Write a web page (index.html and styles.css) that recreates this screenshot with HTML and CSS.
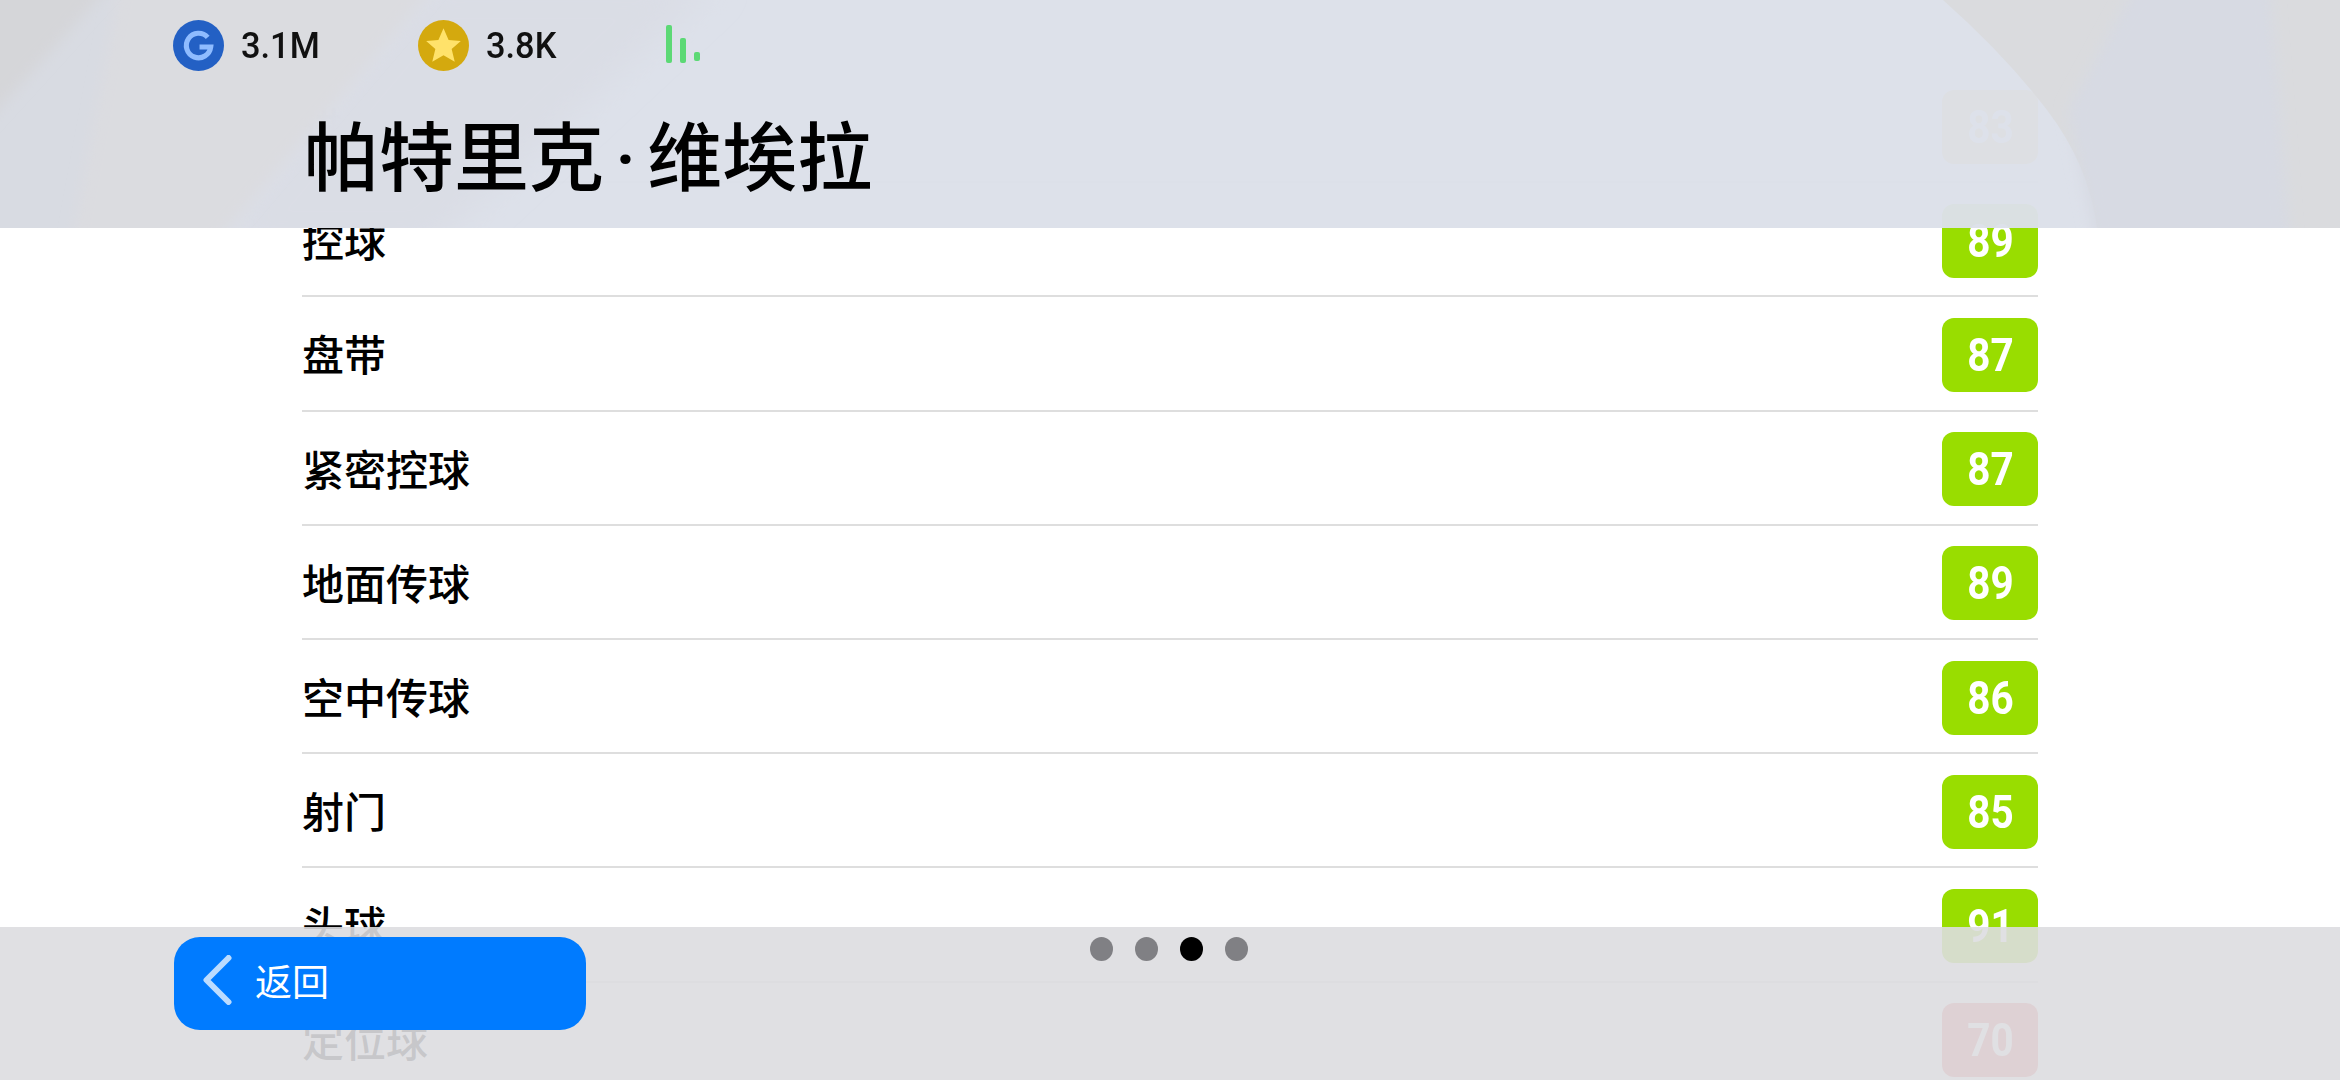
FILE: index.html
```html
<!DOCTYPE html>
<html lang="zh-CN">
<head>
<meta charset="utf-8">
<title>帕特里克·维埃拉</title>
<link rel="stylesheet" href="styles.css">
</head>
<body>
<main class="screen">
  <ul class="stats">
    <li class="stat"><span class="stat-name">进攻意识</span><span class="badge badge-mid"><span class="num">83</span></span></li>
    <li class="stat"><span class="stat-name">控球</span><span class="badge"><span class="num">89</span></span></li>
    <li class="stat"><span class="stat-name">盘带</span><span class="badge"><span class="num">87</span></span></li>
    <li class="stat"><span class="stat-name">紧密控球</span><span class="badge"><span class="num">87</span></span></li>
    <li class="stat"><span class="stat-name">地面传球</span><span class="badge"><span class="num">89</span></span></li>
    <li class="stat"><span class="stat-name">空中传球</span><span class="badge"><span class="num">86</span></span></li>
    <li class="stat"><span class="stat-name">射门</span><span class="badge"><span class="num">85</span></span></li>
    <li class="stat"><span class="stat-name">头球</span><span class="badge"><span class="num">91</span></span></li>
    <li class="stat"><span class="stat-name">定位球</span><span class="badge badge-low"><span class="num">70</span></span></li>
  </ul>

  <header class="top">
    <svg class="top-art" viewBox="0 0 2340 228" preserveAspectRatio="none" aria-hidden="true">
      <defs>
        <filter id="soft" x="-10%" y="-30%" width="120%" height="160%"><feGaussianBlur stdDeviation="7"/></filter>
        <filter id="softer" x="-10%" y="-30%" width="120%" height="160%"><feGaussianBlur stdDeviation="16"/></filter>
      </defs>
      <polygon points="-30,-30 300,-30 120,260 -30,260" fill="#d8dbe2" filter="url(#soft)"/>
      <polygon points="427,-20 720,-20 430,250 200,250" fill="#dadde5" filter="url(#softer)"/>
      <polygon points="120,-20 440,-20 210,250 70,250" fill="#dbdce0" filter="url(#soft)"/>
      <polygon points="-30,-30 125,-30 -30,140" fill="#d5d6d9" filter="url(#soft)"/>
      <path d="M1943 0Q2005 55 2047 110T2097 228H2340V0Z" fill="#dadbde"/>
      <polygon points="2133,-10 2270,-10 2290,250 2097,250 2068,110" fill="#d7dae3" filter="url(#soft)"/>
    </svg>
    <div class="wallet">
      <div class="coin">
        <svg class="coin-icon" viewBox="0 0 50 50" aria-hidden="true">
          <circle cx="25" cy="25" r="25" fill="#2360c4"/>
          <path d="M34 17A12 12 0 1 0 37 26.500H26" fill="none" stroke="#8fbcff" stroke-width="5"/>
        </svg>
        <span class="coin-value">3.1M</span>
      </div>
      <div class="coin">
        <svg class="coin-icon" viewBox="0 0 50 50" aria-hidden="true">
          <circle cx="25" cy="25" r="25" fill="#d4a90e"/>
          <polygon points="25,8 30,19.5 42,20.5 33,28.5 36,41 25,34.5 14,41 17,28.5 8,20.5 20,19.5" fill="#ffe26a"/>
        </svg>
        <span class="coin-value">3.8K</span>
      </div>
      <svg class="signal" viewBox="0 0 36 40" aria-hidden="true">
        <rect x="0" y="0" width="6" height="38" rx="2" fill="#5cd975"/>
        <rect x="14" y="13" width="6" height="25" rx="2" fill="#5cd975"/>
        <rect x="28" y="27" width="6" height="9" rx="2" fill="#5cd975"/>
      </svg>
    </div>
    <h1 class="player">帕特里克<span class="player-dot">·</span>维埃拉</h1>
  </header>

  <footer class="bottom">
    <button class="back" type="button">
      <svg class="back-icon" viewBox="0 0 30 50" aria-hidden="true">
        <path d="M26 3 4 25l22 22" fill="none" stroke="#bcdcff" stroke-width="6" stroke-linecap="round" stroke-linejoin="round"/>
      </svg>
      <span>返回</span>
    </button>
    <div class="pager">
      <i class="dot"></i><i class="dot"></i><i class="dot dot-on"></i><i class="dot"></i>
    </div>
  </footer>
</main>
</body>
</html>
```

FILE: styles.css
```css
* { box-sizing: border-box; }
html, body { margin: 0; padding: 0; height: 100%; }
body {
  background: #fff;
  font-family: "Noto Sans CJK SC", "Noto Sans", sans-serif;
  color: #000;
  overflow: hidden;
}
.screen { position: relative; width: 2340px; height: 1080px; overflow: hidden; background: #fff; }

/* list */
.stats { list-style: none; margin: 0; padding: 69px 302px 0; }
.stat {
  height: 114.2px;
  padding-top: 3px;
  border-bottom: 2px solid #dedede;
  display: flex;
  align-items: center;
  justify-content: space-between;
}
.stat-name { font-size: 42px; font-weight: 500; line-height: 1; margin-bottom: 3px; }
.badge {
  width: 96px;
  height: 74px;
  border-radius: 12px;
  background: #99dd00;
  color: #fff;
  font-family: Roboto, sans-serif;
  font-weight: 700;
  font-size: 46px;
  line-height: 74px;
  text-align: center;
}
.num { display: inline-block; transform: scaleX(0.88); }
.badge-mid { background: #e8b020; }
.badge-low { background: #e86a6a; }

/* header overlay */
.top {
  position: absolute;
  top: 0; left: 0; right: 0;
  height: 228px;
  background: rgba(220, 224, 233, 0.97);
}
.top-art { position: absolute; inset: 0; width: 100%; height: 100%; }
.wallet {
  position: relative;
  display: flex;
  align-items: center;
  padding: 20px 0 0 173px;
  height: 70px;
}
.coin { display: flex; align-items: center; gap: 17px; width: 245px; }
.coin-icon { width: 51px; height: 51px; flex: none; }
.coin-value {
  font-family: Roboto, sans-serif;
  font-size: 37px;
  font-weight: 500;
  line-height: 1;
  color: #111;
  transform: scaleX(0.93);
  transform-origin: left center;
}
.signal { width: 36px; height: 40px; margin-left: 3px; }
.player {
  position: relative;
  margin: 37px 0 0 304px;
  font-size: 75px;
  font-weight: 500;
  line-height: 92px;
}
.player-dot { font-family: Roboto, sans-serif; padding: 0 11px; }

/* bottom overlay */
.bottom {
  position: absolute;
  left: 0; right: 0; bottom: 0;
  height: 153px;
  background: rgba(221, 221, 224, 0.9);
  padding: 10px 0 0 174px;
  display: flex;
  align-items: flex-start;
}
.back {
  width: 412px;
  height: 93px;
  border: 0;
  border-radius: 26px;
  background: #007bff;
  color: #fff;
  font-family: inherit;
  font-size: 37px;
  font-weight: 400;
  display: flex;
  align-items: center;
  gap: 22px;
  padding: 0 0 8px 28px;
}
.back-icon { width: 31px; height: 50px; flex: none; }
.pager { display: flex; gap: 22px; margin-left: 504px; }
.dot { width: 23px; height: 24px; border-radius: 50%; background: #808084; display: block; }
.dot-on { background: #000; }
```
